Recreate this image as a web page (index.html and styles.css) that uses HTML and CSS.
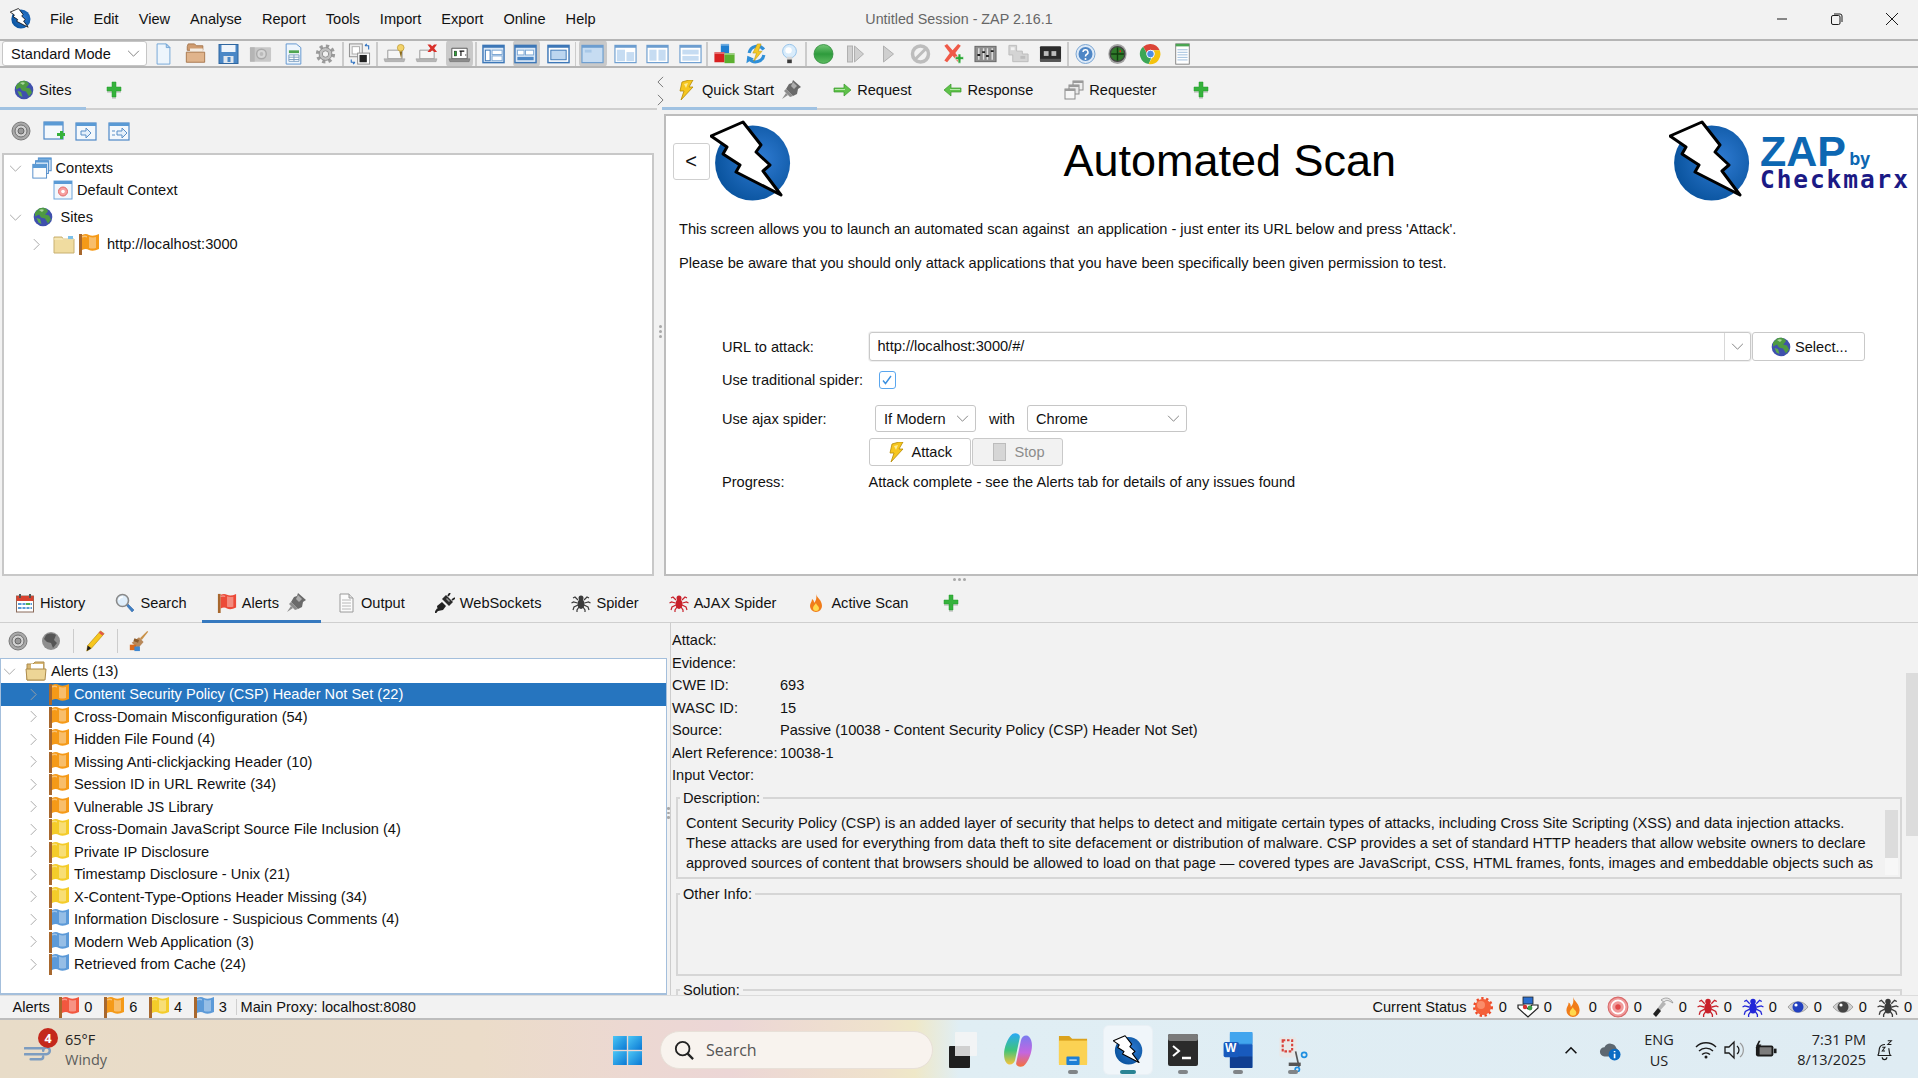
FILE: index.html
```html
<!DOCTYPE html>
<html lang="en">
<head>
<meta charset="utf-8">
<title>Untitled Session - ZAP 2.16.1</title>
<link rel="stylesheet" href="styles.css">
</head>
<body>
<svg class="defs" aria-hidden="true">
<defs>
<radialGradient id="gBlue" cx=".6" cy=".45" r=".6"><stop offset="0" stop-color="#2f7bd2"/><stop offset="1" stop-color="#0a549f"/></radialGradient>
<linearGradient id="gWin" x1="0" y1="0" x2="1" y2="1"><stop offset="0" stop-color="#4cc6f5"/><stop offset="1" stop-color="#0a78d4"/></linearGradient>
<linearGradient id="gGreen" x1="0" y1="0" x2="0" y2="1"><stop offset="0" stop-color="#74c777"/><stop offset=".5" stop-color="#2e9b3c"/><stop offset="1" stop-color="#5fbc62"/></linearGradient>
<linearGradient id="gCo1" x1="0" y1="0" x2="0" y2="1"><stop offset="0" stop-color="#29a9f6"/><stop offset=".55" stop-color="#3fc47a"/><stop offset="1" stop-color="#f5c33b"/></linearGradient>
<linearGradient id="gCo2" x1="0" y1="0" x2="0" y2="1"><stop offset="0" stop-color="#7a7cf0"/><stop offset=".55" stop-color="#c466e0"/><stop offset="1" stop-color="#f5703b"/></linearGradient>
</defs>
<symbol id="logo" viewBox="0 0 82 82"><circle cx="42.6" cy="43" r="37.5" fill="url(#gBlue)"/><path d="M1 16 33 2 51 25 46 32 60 45 53 51 71 75 26 52 30 45 13 34 17 27Z" fill="#fff" stroke="#000" stroke-width="3" stroke-linejoin="round"/></symbol>
<symbol id="flag" viewBox="0 0 22 22"><rect x="1" y="1" width="3" height="21" fill="#a8682e"/><path d="M4 2q4-2 7 0q4 2 10-1v15q-6 3-10 1q-3-2-7 0z" fill="currentColor"/><path d="M11 3.500q3 1.500 7 .5v11q-4 1-7 0z" fill="#fff" opacity=".36"/><path d="M4 3q3-1 5 0v1.500q-2-1-5 0z" fill="#fff" opacity=".4"/></symbol>
<symbol id="chevR" viewBox="0 0 10 14"><path d="M2 1l6 6-6 6" fill="none" stroke="currentColor" stroke-width="1"/></symbol>
<symbol id="chevL" viewBox="0 0 10 14"><path d="M8 1L2 7l6 6" fill="none" stroke="currentColor" stroke-width="1"/></symbol>
<symbol id="chevD" viewBox="0 0 14 10"><path d="M1 2l6 6 6-6" fill="none" stroke="currentColor" stroke-width="1"/></symbol>
<symbol id="chevU" viewBox="0 0 14 10"><path d="M1 8l6-6 6 6" fill="none" stroke="currentColor" stroke-width="1.800"/></symbol>
<symbol id="globe" viewBox="0 0 20 20"><circle cx="10" cy="10" r="9.300" fill="#3f50ad"/><path d="M6 1.500c3-1 6-1 8 1 2 2 0 3-2 5l4 1 2 4-3 4-3-5-4-1-2-3-4 2 0-4z" fill="#4e9a42"/><path d="M3.500 11l3.500 1 1.500 5-3-1.500z" fill="#5bab4d"/><path d="M6 3c2-1 4-1 5 0l-2 2z" fill="#a8d59a"/></symbol>
<symbol id="plus" viewBox="0 0 20 20"><path d="M8 4h4v5h5v4h-5v6H8v-6H3V9h5z" fill="#b9b9b9" opacity=".6"/><path d="M8 2h4v5h5v4h-5v6H8v-6H3V7h5z" fill="#36b23c" stroke="#239a2b" stroke-width=".5"/></symbol>
<symbol id="pin" viewBox="0 0 20 20"><path d="M12 0l8 7-3 2-1 5-4 2-7-7 3-5 3-1z" fill="#6a6a6a"/><path d="M5 9l7 7-3 1-6-6z" fill="#8c8c8c"/><path d="M5 13l-4 6 6-4z" fill="#8f8f8f"/><path d="M12 2l4 4-3 3-3-3z" fill="#adadad"/></symbol>
<symbol id="bolt" viewBox="0 0 20 20"><path d="M12 0 5 2 3 11h4L4 20 16 7h-4l4-7z" fill="#f6c61e" stroke="#b58a08" stroke-width=".8" stroke-linejoin="round"/><path d="M7 4l4-1-2 5z" fill="#fdeb96"/></symbol>
<symbol id="arrR" viewBox="0 0 20 20"><path d="M2 8h10V4l7 6-7 6v-4H2z" fill="#5fc24a" stroke="#3a9a2d" stroke-width=".7"/><path d="M3 9h10v1H3z" fill="#b5e8a8"/></symbol>
<symbol id="arrL" viewBox="0 0 20 20"><path d="M18 8H8V4l-7 6 7 6v-4h10z" fill="#5fc24a" stroke="#3a9a2d" stroke-width=".7"/><path d="M7 9h10v1H7z" fill="#b5e8a8"/></symbol>
<symbol id="stack" viewBox="0 0 20 20"><rect x="9" y="1" width="10" height="9" fill="#eee" stroke="#8a8a8a"/><rect x="5" y="5" width="10" height="9" fill="#e8e8e8" stroke="#8a8a8a"/><rect x="1" y="9" width="10" height="10" fill="#f6f6f6" stroke="#8a8a8a"/><path d="M1 9h10v2H1zM5 5h10v2H5zM9 1h10v2H9z" fill="#9a9a9a"/></symbol>
<symbol id="cal" viewBox="0 0 20 20"><rect x="1.500" y="3" width="17" height="16" fill="#fff" stroke="#8a6a5a"/><rect x="1.500" y="3" width="17" height="5" fill="#d8422f"/><path d="M5 1v4M15 1v4" stroke="#555" stroke-width="2"/><path d="M3 10h14v2H3zM3 14h14v2H3z" fill="#5a9ad5"/><path d="M7 9v9M11 9v9M15 9v9" stroke="#fff"/><rect x="11" y="10" width="4" height="2" fill="#50b050"/></symbol>
<symbol id="mag" viewBox="0 0 20 20"><path d="M11 12l6 7 2-2-6-6z" fill="#3f7fc4" stroke="#2a5f9c" stroke-width=".5"/><circle cx="7.500" cy="7.500" r="6" fill="#dfeefb" stroke="#8a8a8a" stroke-width="1.600"/><path d="M4 7a3.500 3.500 0 0 1 4-3" fill="none" stroke="#fff" stroke-width="1.500"/></symbol>
<symbol id="doc" viewBox="0 0 20 20"><path d="M4 1h9l4 4v14H4z" fill="#fbfbfb" stroke="#9a9a9a"/><path d="M13 1v4h4" fill="#ddd" stroke="#9a9a9a"/><path d="M6 7h9M6 10h9M6 13h9M6 16h9" stroke="#b8b8b8"/></symbol>
<symbol id="plug" viewBox="0 0 20 20"><path d="M13 3l2-3M17 7l3-2" fill="none" stroke="#222" stroke-width="1.800"/><path d="M11 2l7 7-4 4-7-7z" fill="#2b2b2b"/><path d="M7 9l4 4-3 4-5 1-1-5z" fill="#222"/><path d="M3 16l-3 4" stroke="#222" stroke-width="2.200"/><path d="M12 5l3 3-1 1-3-3z" fill="#999"/></symbol>
<symbol id="spider" viewBox="0 0 20 20"><g stroke="currentColor" stroke-width="1.200" fill="none"><path d="M7 7L4 4 2 5M13 7l3-3 2 1M6.500 10l-4-1-2 1M13.500 10l4-1 2 1M7 12l-4 2-1 3M13 12l4 2 1 3M8 14l-2 3v2M12 14l2 3v2"/></g><ellipse cx="10" cy="11" rx="3.500" ry="5" fill="currentColor"/><circle cx="10" cy="5" r="2.500" fill="currentColor"/></symbol>
<symbol id="fire" viewBox="0 0 20 20"><path d="M10 1c1 4 6 6 6 12a6 6 0 0 1-12 0c0-3 2-4 2-7 2 1 2 3 2 4 2-2 3-5 2-9z" fill="#f07c1a"/><path d="M10 10c0 2 3 3 3 5a3 3 0 0 1-6 0c0-2 2-3 3-5z" fill="#ffd84d"/></symbol>
<symbol id="target" viewBox="0 0 20 20"><circle cx="10" cy="10" r="9" fill="#f09a9a" stroke="#d86a6a"/><circle cx="10" cy="10" r="6" fill="none" stroke="#fff" stroke-width="1.500"/><circle cx="10" cy="10" r="2.500" fill="#e04a4a"/></symbol>
<symbol id="target2" viewBox="0 0 22 22"><circle cx="11" cy="11" r="9" fill="#a9a9a9" stroke="#7a7a7a"/><circle cx="11" cy="11" r="6" fill="#d2d2d2" stroke="#6f6f6f"/><circle cx="11" cy="11" r="3" fill="#999" stroke="#666"/></symbol>
<symbol id="globeG" viewBox="0 0 22 22"><circle cx="11" cy="11" r="9" fill="#8f8f8f"/><path d="M6 5c3-2 7-2 10 0l-2 5 3 3-4 5-2-5-4-1-3-3z" fill="#555"/></symbol>
<symbol id="ctxAdd" viewBox="0 0 22 22"><rect x="1" y="2" width="19" height="17" fill="#f4f8fc" stroke="#4d88c7" stroke-width="1.200"/><rect x="1" y="2" width="19" height="3.500" fill="#5a9ad5"/><path d="M14 13h3v-2h3v2h2v3h-2v3h-3v-3h-3z" fill="#36b23c"/></symbol>
<symbol id="ctxIn" viewBox="0 0 22 22"><rect x="1" y="3" width="20" height="17" fill="#f4f8fc" stroke="#4d88c7" stroke-width="1.200"/><rect x="1" y="3" width="20" height="3" fill="#5a9ad5"/><path d="M6 11h5V8l5 5-5 5v-3H6z" fill="#e4effa" stroke="#5a8fc7"/></symbol>
<symbol id="ctxOut" viewBox="0 0 22 22"><rect x="1" y="3" width="20" height="17" fill="#f4f8fc" stroke="#4d88c7" stroke-width="1.200"/><rect x="1" y="3" width="20" height="3" fill="#5a9ad5"/><path d="M9 11h5V8l5 5-5 5v-3H9z" fill="#e4effa" stroke="#5a8fc7"/><path d="M4 11h3M4 15h3" stroke="#5a8fc7"/></symbol>
<symbol id="ctxs" viewBox="0 0 22 24"><rect x="7" y="1" width="14" height="14" fill="#c9def3" stroke="#4d88c7"/><rect x="4" y="4" width="14" height="14" fill="#dcebf9" stroke="#4d88c7"/><rect x="1" y="8" width="15" height="15" fill="#fdfdfd" stroke="#4d88c7"/><path d="M1 8h15v4H1zM4 4h14v2H4zM7 1h14v2H7z" fill="#5a9ad5"/></symbol>
<symbol id="ctx" viewBox="0 0 20 20"><rect x="1" y="1" width="18" height="18" fill="#f2f7fc" stroke="#6fa5dc"/><rect x="1" y="1" width="18" height="3" fill="#5a9ad5"/><circle cx="10" cy="11.500" r="4.500" fill="#f7a0a0" stroke="#e06a6a"/><circle cx="10" cy="11.500" r="1.800" fill="#fff"/></symbol>
<symbol id="folder" viewBox="0 0 22 22"><path d="M1 4h8l1 2h11v14H1z" fill="#f0dca0" stroke="#c8b070"/><path d="M1 6h20" stroke="#faf0c8"/><rect x="15" y="3" width="5" height="3" fill="#7cc0ea"/></symbol>
<symbol id="folderOpen" viewBox="0 0 22 22"><path d="M2 4h6l2-2h9v18H2z" fill="#d9b873" stroke="#ad8c4c"/><rect x="6" y="4" width="12" height="6" fill="#fff"/><path d="M1 9h20l-1 11H2z" fill="#edd596" stroke="#ad8c4c"/></symbol>
<symbol id="tnew" viewBox="0 0 22 24"><path d="M4 1h10l4 4v18H4z" fill="#edf5fc" stroke="#6ea3d5"/><path d="M14 1v4h4z" fill="#b8d4ef" stroke="#6ea3d5"/></symbol>
<symbol id="topen" viewBox="0 0 24 24"><path d="M3 4l1-3h7l2 2h7v5H3z" fill="#cf9c70" stroke="#a5744a"/><rect x="6" y="6" width="14" height="6" fill="#f4ece2"/><path d="M2 10h20v11H2z" fill="#e0b48c" stroke="#a5744a"/></symbol>
<symbol id="tsave" viewBox="0 0 22 22"><rect x="1.500" y="1.500" width="19" height="19" fill="#4a87c6" stroke="#2f669f"/><rect x="4" y="2" width="14" height="7" fill="#eef4fb"/><rect x="6" y="13" width="10" height="7" fill="#dfe6ee"/><rect x="10" y="14" width="3" height="5" fill="#4a87c6"/></symbol>
<symbol id="tcam" viewBox="0 0 24 22"><rect x="1" y="4" width="22" height="15" rx="1" fill="#c8c8c8"/><rect x="1" y="4" width="5" height="15" fill="#b5b5b5"/><circle cx="13" cy="11" r="5" fill="#d6d6d6" stroke="#aaa" stroke-width="1.500"/><circle cx="13" cy="11" r="2" fill="#bbb"/></symbol>
<symbol id="tprop" viewBox="0 0 22 24"><path d="M3 1h11l5 4v18H3z" fill="#eef5fc" stroke="#5a92cf"/><rect x="6" y="8" width="11" height="3" fill="#4fa552"/><path d="M6 13h11v7H6z" fill="#fff" stroke="#7a9cc0"/><path d="M6 15.500h11M6 18h11M11.500 13v7" stroke="#7a9cc0"/></symbol>
<symbol id="tgear" viewBox="0 0 24 24"><circle cx="12" cy="12" r="8" fill="none" stroke="#9b9b9b" stroke-width="5" stroke-dasharray="3.200 3.100"/><circle cx="12" cy="12" r="7" fill="#c0c0c0" stroke="#8a8a8a"/><circle cx="12" cy="12" r="3.500" fill="#f2f2f2" stroke="#8a8a8a"/></symbol>
<symbol id="tcopy" viewBox="0 0 24 24"><rect x="1" y="1" width="14" height="14" fill="#ededed" stroke="#8a8a8a"/><rect x="4" y="4" width="8" height="8" fill="#fff" stroke="#aaa"/><rect x="10" y="11" width="13" height="12" fill="#fff" stroke="#8a8a8a"/><rect x="12" y="13" width="8" height="8" fill="#222"/><path d="M18 3h4v4M18 3l2-2M3 18v3h4M7 21l-2 2" fill="none" stroke="#2a6fc0" stroke-width="1.200"/></symbol>
<symbol id="lap" viewBox="0 0 24 22"><path d="M5 7h15v9H5z" fill="#f6f6f6" stroke="#9a9a9a"/><path d="M1 16h22l-1 3H2z" fill="#b6b6b6" stroke="#999" stroke-width=".5"/></symbol>
<symbol id="lapBulb" viewBox="0 0 24 22"><use href="#lap"/><path d="M17 8l2 8 1-8z" fill="#8a6a1a"/><circle cx="18.500" cy="4.500" r="3.500" fill="#f3d36a" stroke="#b7932a" stroke-width=".7"/></symbol>
<symbol id="lapX" viewBox="0 0 24 22"><use href="#lap"/><path d="M13 1l3 0 2 2 2-2 3 0-3 4 3 4h-3l-2-2-2 2h-3l3-4z" fill="#d9302a"/></symbol>
<symbol id="lapOn" viewBox="0 0 24 22"><path d="M4 5h16v11H4z" fill="#fff" stroke="#555"/><rect x="6.500" y="8" width="2.500" height="5" fill="#2fa83a" stroke="#111" stroke-width=".5"/><path d="M12 8h5M13.500 8v5M18 12h1" stroke="#111" stroke-width="1.200"/><path d="M1 16h22l-1 3H2z" fill="#8c8c8c" stroke="#666" stroke-width=".5"/></symbol>
<symbol id="w1" viewBox="0 0 24 22"><rect x="1" y="2" width="22" height="18" fill="#dce9f7" stroke="#3d77b7" stroke-width="1.500"/><rect x="1" y="2" width="22" height="2.500" fill="#3d77b7"/><rect x="3.500" y="7" width="5" height="11" fill="#fff" stroke="#3d77b7"/><rect x="10.500" y="7" width="10.500" height="4.500" fill="#fff" stroke="#7ba6d3"/><rect x="10.500" y="13" width="10.500" height="5" fill="#fff" stroke="#7ba6d3"/></symbol>
<symbol id="w2" viewBox="0 0 24 22"><rect x="1" y="2" width="22" height="18" fill="#dce9f7" stroke="#3d77b7" stroke-width="1.500"/><rect x="1" y="2" width="22" height="2.500" fill="#3d77b7"/><rect x="3.500" y="7" width="7" height="5" fill="#fff" stroke="#7ba6d3"/><rect x="12" y="7" width="8.500" height="5" fill="#fff" stroke="#7ba6d3"/><rect x="3.500" y="14" width="17" height="3.500" fill="#4d88c7"/></symbol>
<symbol id="w3" viewBox="0 0 24 22"><rect x="1" y="2" width="22" height="18" fill="#fff" stroke="#3d77b7" stroke-width="1.500"/><rect x="1" y="2" width="22" height="2.500" fill="#3d77b7"/><rect x="4" y="7" width="16" height="10" fill="#bcd6f0" stroke="#3d77b7"/></symbol>
<symbol id="w4" viewBox="0 0 24 22"><rect x="1" y="2" width="22" height="18" fill="#c6dcf2" stroke="#6c9dcf" stroke-width="1.200"/><rect x="1" y="2" width="22" height="2.500" fill="#6c9dcf"/><rect x="4" y="6.500" width="7" height="3" fill="#a8c8e8"/></symbol>
<symbol id="w5" viewBox="0 0 24 22"><rect x="1" y="2" width="22" height="18" fill="#fff" stroke="#6c9dcf" stroke-width="1.200"/><rect x="1" y="2" width="22" height="2.500" fill="#6c9dcf"/><rect x="3" y="6.500" width="8.500" height="12" fill="#c6dcf2"/><rect x="13" y="9" width="8" height="9.500" fill="#c6dcf2"/></symbol>
<symbol id="w6" viewBox="0 0 24 22"><rect x="1" y="2" width="22" height="18" fill="#fff" stroke="#6c9dcf" stroke-width="1.200"/><rect x="1" y="2" width="22" height="2.500" fill="#6c9dcf"/><rect x="3.500" y="6.500" width="7.500" height="11.500" fill="#c6dcf2"/><rect x="13" y="6.500" width="7.500" height="11.500" fill="#c6dcf2"/></symbol>
<symbol id="w7" viewBox="0 0 24 22"><rect x="1" y="2" width="22" height="18" fill="#fff" stroke="#6c9dcf" stroke-width="1.200"/><rect x="1" y="2" width="22" height="2.500" fill="#6c9dcf"/><rect x="3.500" y="6.500" width="17" height="5" fill="#c6dcf2"/><rect x="3.500" y="13" width="17" height="5" fill="#c6dcf2"/></symbol>
<symbol id="blocks" viewBox="0 0 24 24"><rect x="8" y="1" width="9" height="11" fill="#1f7fd0"/><rect x="1" y="10" width="11" height="11" fill="#d82020"/><rect x="12" y="11" width="11" height="11" fill="#5cb030"/><path d="M8 1h9v2H8zM1 10h11v2H1zM12 11h11v2H12z" fill="#fff" opacity=".35"/></symbol>
<symbol id="refresh" viewBox="0 0 24 24"><path d="M4 11a9 9 0 0 1 16-4M20 13a9 9 0 0 1-16 4" fill="none" stroke="#2f8fd8" stroke-width="3.500"/><path d="M1 22l1-8 7 3z" fill="#2f8fd8"/><path d="M13 1 8 11h4L9 20l9-11h-4l3-8z" fill="#f3c928" stroke="#b99414" stroke-width=".6"/></symbol>
<symbol id="bulb" viewBox="0 0 24 24"><circle cx="12" cy="9" r="7.500" fill="#d9ecfb" stroke="#8fbfe8"/><circle cx="11" cy="8" r="3.500" fill="#fff"/><path d="M9 15h6v3H9z" fill="#d6d6d6"/><path d="M9.500 18h5v4h-5z" fill="#3a3a3a"/></symbol>
<symbol id="go" viewBox="0 0 22 22"><circle cx="11" cy="11" r="9.500" fill="url(#gGreen)" stroke="#2c8a38" stroke-width=".8"/></symbol>
<symbol id="stepP" viewBox="0 0 22 22"><rect x="3" y="3" width="5" height="16" fill="#d0d0d0" stroke="#b0b0b0"/><path d="M10 3l9 8-9 8z" fill="#d0d0d0" stroke="#b0b0b0"/></symbol>
<symbol id="play" viewBox="0 0 22 22"><path d="M6 3l10 8-10 8z" fill="#cfcfcf" stroke="#b0b0b0"/></symbol>
<symbol id="noent" viewBox="0 0 22 22"><circle cx="11" cy="11" r="8" fill="none" stroke="#bdbdbd" stroke-width="3.500"/><path d="M6 16l10-10" stroke="#bdbdbd" stroke-width="3"/></symbol>
<symbol id="xadd" viewBox="0 0 24 24"><path d="M2 3l3-2 6 7 6-7 3 2-6 8 6 8-3 2-6-7-6 7-3-2 6-8z" fill="#f05a48"/><path d="M14 15h3v-3h3v3h3v3h-3v4h-3v-4h-3z" fill="#2fa83a" stroke="#fff" stroke-width=".6"/></symbol>
<symbol id="mixer" viewBox="0 0 24 22"><rect x="1" y="3" width="22" height="16" fill="#8f8f8f" stroke="#666"/><path d="M5 5v12M10 5v12M14 5v12M19 5v12" stroke="#e0e0e0" stroke-width="1.500"/><path d="M3.500 12h3M8.500 9h3M12.500 13h3M17.500 8h3" stroke="#222" stroke-width="2"/></symbol>
<symbol id="mach" viewBox="0 0 24 22"><path d="M2 2h8v6h6v3h6v8H6v-7H2z" fill="#d4d4d4" stroke="#bcbcbc"/><rect x="4" y="4" width="4" height="3" fill="#f2f2f2"/><rect x="14" y="13" width="5" height="3" fill="#bdbdbd"/></symbol>
<symbol id="counter" viewBox="0 0 24 22"><rect x="1" y="3" width="22" height="16" rx="1" fill="#2b2b2b"/><rect x="5" y="8" width="5" height="5" fill="#bdbdbd"/><rect x="13" y="8" width="5" height="5" fill="#bdbdbd"/><path d="M1 16h22v3H1z" fill="#555"/></symbol>
<symbol id="help" viewBox="0 0 22 22"><circle cx="11" cy="11" r="9.500" fill="#dce9f7" stroke="#7ba6d3"/><circle cx="11" cy="11" r="7" fill="#4e86c5"/><path d="M8.500 9a2.500 2.500 0 1 1 3.500 2.500c-.8.500-1 1-1 2" fill="none" stroke="#fff" stroke-width="1.500"/><circle cx="11" cy="16" r="1" fill="#fff"/></symbol>
<symbol id="radar" viewBox="0 0 22 24"><ellipse cx="11" cy="12" rx="10" ry="11" fill="#a2a2a2"/><circle cx="11" cy="12" r="8" fill="#2f7a2a" stroke="#444" stroke-width="1.500"/><path d="M11 5v14M4 12h14" stroke="#123d10" stroke-width="1.500"/><circle cx="14" cy="9" r="1" fill="#e02b20"/></symbol>
<symbol id="chrome" viewBox="0 0 24 24"><path d="M12 1a11 11 0 0 1 10 7H12a4 4 0 0 0-4 3L4 4a11 11 0 0 1 8-3z" fill="#db4437"/><path d="M4 4l5 9a4 4 0 0 0 4 3l-3 7A11 11 0 0 1 4 4z" fill="#3ca655"/><path d="M22 8a11 11 0 0 1-12 15l5-9a4 4 0 0 0 0-6z" fill="#f4c20d"/><circle cx="12" cy="12" r="4.200" fill="#4d8de4" stroke="#fff"/></symbol>
<symbol id="note" viewBox="0 0 22 26"><rect x="3" y="1" width="16" height="24" fill="#fff" stroke="#777"/><rect x="3" y="1" width="16" height="3" fill="#4aa552"/><path d="M5 8h12M5 11h12M5 14h12M5 17h12M5 20h12" stroke="#8fb4d8"/></symbol>
<symbol id="pencil" viewBox="0 0 22 24"><path d="M17 1l4 3L7 20l-5 3 1-6z" fill="#f6c61e" stroke="#b58a08" stroke-width=".7"/><path d="M17 1l4 3-2 2-4-3z" fill="#e2574c"/><path d="M3 17l4 3-5 3z" fill="#222"/></symbol>
<symbol id="brush" viewBox="0 0 22 24"><path d="M20 1l1 1-7 9-2-2z" fill="#c9924a"/><path d="M11 8l5 5-6 7-7-6z" fill="#b8895a"/><path d="M6 9l5 2-1 3-5-2z" fill="#8b5a2a"/><rect x="1" y="16" width="7" height="6" fill="#d96a1c"/><rect x="6" y="18" width="6" height="5" fill="#3f88d0"/></symbol>
<symbol id="sun" viewBox="0 0 22 22"><circle cx="11" cy="11" r="7.500" fill="none" stroke="#ee4a28" stroke-width="5" stroke-dasharray="2 2.200"/><circle cx="11" cy="11" r="8" fill="#f4603a"/><circle cx="9" cy="9" r="4" fill="#fa8c6a"/></symbol>
<symbol id="inbox" viewBox="0 0 22 22"><path d="M1 9h6l4 4 4-4h6v3l-10 9L1 12z" fill="#fff" stroke="#222" stroke-width="1.200"/><rect x="6" y="1" width="10" height="7" fill="#2a6fd0" stroke="#222" stroke-width=".8"/><circle cx="8" cy="11" r="2.200" fill="#d83030"/><circle cx="13" cy="12" r="2.400" fill="#3ca048"/></symbol>
<symbol id="hammer" viewBox="0 0 22 22"><path d="M9 4c4-3 9-3 12 3l-2-1c-3-2-5-2-7 0z" fill="#e6e6e6" stroke="#888" stroke-width=".7"/><path d="M11 5l3 3L4 19l-2-2z" fill="#b5b5b5"/><path d="M6 12l3 3-5 6-3-3z" fill="#222"/></symbol>
<symbol id="eye" viewBox="0 0 22 22"><path d="M1 11c5-7 15-7 20 0-5 7-15 7-20 0z" fill="#cfcfcf" stroke="#8a8a8a" stroke-width=".7"/><circle cx="11" cy="11" r="5.500" fill="currentColor"/><circle cx="9" cy="9" r="1.600" fill="#fff"/></symbol>
<symbol id="wind" viewBox="0 0 36 26"><path d="M1 11h22M1 18h26a4 4 0 1 0-4-4M8 24h12a3 3 0 0 0 3-3" fill="none" stroke="#7c9cc0" stroke-width="3" stroke-linecap="round"/></symbol>
<symbol id="winlogo" viewBox="0 0 30 30"><rect width="14.300" height="14.300" fill="url(#gWin)"/><rect x="15.700" width="14.300" height="14.300" fill="url(#gWin)"/><rect y="15.700" width="14.300" height="14.300" fill="url(#gWin)"/><rect x="15.700" y="15.700" width="14.300" height="14.300" fill="url(#gWin)"/></symbol>
<symbol id="srch" viewBox="0 0 22 22"><circle cx="9.500" cy="9.500" r="7.500" fill="none" stroke="#222" stroke-width="2"/><path d="M15 15l6 6" stroke="#222" stroke-width="2.500"/></symbol>
<symbol id="tasks" viewBox="0 0 30 38"><rect x="1" y="15" width="21" height="22" rx="1" fill="#1f1f1f"/><rect x="7" y="1" width="22" height="24" rx="1" fill="#f4f4f4" opacity=".85"/><rect x="7" y="15" width="15" height="10" fill="#d0d0d0"/></symbol>
<symbol id="copilot" viewBox="0 0 32 38"><path d="M10 2c4-2 8 0 8 3l-5 24c-1 5-6 7-9 4C-2 27 2 9 10 2z" fill="url(#gCo1)"/><path d="M22 36c-4 2-8 0-8-3l5-24c1-5 6-7 9-4 6 6 2 24-6 31z" fill="url(#gCo2)"/></symbol>
<symbol id="explorer" viewBox="0 0 32 32"><path d="M1 1h11l3 3h16v26H1z" fill="#dba21d"/><rect x="1" y="6" width="30" height="26" fill="#fbd253"/><rect x="9" y="23" width="14" height="9" rx="1" fill="#1c7fd6"/><rect x="12" y="26" width="8" height="1.600" fill="#bfe0fa"/></symbol>
<symbol id="term" viewBox="0 0 30 32"><rect width="30" height="32" rx="2" fill="#2b2b2b"/><rect width="30" height="7" rx="2" fill="#7a7a7a"/><path d="M5 12l6 5-6 5" fill="none" stroke="#fff" stroke-width="2"/><path d="M14 24h9" stroke="#fff" stroke-width="2.500"/></symbol>
<symbol id="word" viewBox="0 0 32 40"><rect x="7" width="25" height="40" rx="2" fill="#2b7cd3"/><rect x="7" y="14" width="25" height="13" fill="#185abd"/><rect x="7" y="27" width="25" height="13" fill="#103f91"/><rect x="7" width="25" height="13" fill="#41a5ee"/><rect y="11" width="17" height="17" rx="2" fill="#185abd"/></symbol>
<symbol id="snip" viewBox="0 0 34 42"><rect x="1" y="1" width="20" height="24" rx="3" fill="#e8e8e8"/><rect x="5" y="5" width="11" height="13" fill="none" stroke="#d9423a" stroke-width="2.500" stroke-dasharray="3 2"/><path d="M20 18l4 18" stroke="#555" stroke-width="2"/><circle cx="30" cy="22" r="3" fill="none" stroke="#1f8fe0" stroke-width="2"/><circle cx="22" cy="39" r="2.500" fill="none" stroke="#1f8fe0" stroke-width="2"/><path d="M12 33h14" stroke="#555" stroke-width="4"/></symbol>
<symbol id="cloud" viewBox="0 0 24 24"><path d="M6 19a5 5 0 0 1 0-10 7 7 0 0 1 13 1 5 5 0 0 1-1 9z" fill="#5d6770"/><circle cx="17" cy="17" r="6.500" fill="#0a6cc4"/><path d="M17 16v5M17 13v1.500" stroke="#fff" stroke-width="1.800"/></symbol>
<symbol id="wifi" viewBox="0 0 22 18"><path d="M1 6a14 14 0 0 1 20 0M4 10a10 10 0 0 1 14 0M7 13.500a6 6 0 0 1 8 0" fill="none" stroke="#1b1b1b" stroke-width="1.400"/><circle cx="11" cy="16" r="1.500" fill="#1b1b1b"/></symbol>
<symbol id="vol" viewBox="0 0 22 20"><path d="M1 7h4l5-5v16l-5-5H1z" fill="none" stroke="#1b1b1b" stroke-width="1.300"/><path d="M13 6a5 5 0 0 1 0 8" fill="none" stroke="#1b1b1b" stroke-width="1.300"/><path d="M16 3a9 9 0 0 1 0 14" fill="none" stroke="#9a9a9a" stroke-width="1.200"/></symbol>
<symbol id="batt" viewBox="0 0 24 20"><rect x="1" y="5" width="19" height="12" rx="2" fill="#1b1b1b"/><rect x="20.500" y="8.500" width="3" height="5" fill="#1b1b1b"/><rect x="5" y="7" width="13" height="8" fill="#7c7c7c"/><path d="M4 0 1 6h3l-2 5 5-7H4l2-4z" fill="#1b1b1b"/></symbol>
<symbol id="bell" viewBox="0 0 24 24"><path d="M4 18c2-2 1-4 2-8 1-3 4-4 6-4M4 18h14c-2-2-1-6-2-8" fill="none" stroke="#1b1b1b" stroke-width="1.300"/><path d="M9 20a2.500 2.500 0 0 0 5 0" fill="none" stroke="#1b1b1b" stroke-width="1.300"/><path d="M15 2h4l-4 4h4M9 9h3l-3 4h3" fill="none" stroke="#1b1b1b" stroke-width="1.100"/></symbol>
<symbol id="back" viewBox="0 0 12 10"><path d="M1 5h10" stroke="#1b1b1b"/></symbol>
<symbol id="restore" viewBox="0 0 12 12"><rect x=".5" y="2.500" width="8.500" height="9" rx="1.500" fill="none" stroke="#1b1b1b"/><path d="M3 1h6a2 2 0 0 1 2 2v6" fill="none" stroke="#1b1b1b"/></symbol>
<symbol id="close" viewBox="0 0 12 12"><path d="M0 0l12 12M12 0L0 12" stroke="#1b1b1b"/></symbol>
<symbol id="check" viewBox="0 0 12 12"><path d="M2 6.500l2.500 3L10 2" fill="none" stroke="#3a8fe0" stroke-width="1.400"/></symbol>
</svg>

<div class="app">
  <header class="titlebar">
    <nav class="menu">
      <svg class="menu-logo"><use href="#logo"/></svg>
      <span>File</span><span>Edit</span><span>View</span><span>Analyse</span><span>Report</span><span>Tools</span><span>Import</span><span>Export</span><span>Online</span><span>Help</span>
    </nav>
    <div class="wintitle">Untitled Session - ZAP 2.16.1</div>
    <div class="winctl">
      <svg class="wc wc-min"><use href="#back"/></svg>
      <svg class="wc"><use href="#restore"/></svg>
      <svg class="wc"><use href="#close"/></svg>
    </div>
  </header>

  <div class="toolbar">
    <div class="combo combo-mode"><span class="combo-text">Standard Mode</span><svg class="chev-d"><use href="#chevD"/></svg></div>
    <div class="tbtn"><svg class="ti"><use href="#tnew"/></svg></div>
    <div class="tbtn"><svg class="ti"><use href="#topen"/></svg></div>
    <div class="tbtn"><svg class="ti"><use href="#tsave"/></svg></div>
    <div class="tbtn"><svg class="ti"><use href="#tcam"/></svg></div>
    <div class="tbtn"><svg class="ti"><use href="#tprop"/></svg></div>
    <div class="tbtn"><svg class="ti"><use href="#tgear"/></svg></div>
    <i class="tsep"></i>
    <div class="tbtn"><svg class="ti"><use href="#tcopy"/></svg></div>
    <i class="tsep"></i>
    <div class="tbtn"><svg class="ti"><use href="#lapBulb"/></svg></div>
    <div class="tbtn"><svg class="ti"><use href="#lapX"/></svg></div>
    <div class="tbtn sel"><svg class="ti"><use href="#lapOn"/></svg></div>
    <i class="tsep"></i>
    <div class="tbtn"><svg class="ti"><use href="#w1"/></svg></div>
    <div class="tbtn sel"><svg class="ti"><use href="#w2"/></svg></div>
    <div class="tbtn"><svg class="ti"><use href="#w3"/></svg></div>
    <i class="tsep"></i>
    <div class="tbtn sel"><svg class="ti"><use href="#w4"/></svg></div>
    <div class="tbtn"><svg class="ti"><use href="#w5"/></svg></div>
    <div class="tbtn"><svg class="ti"><use href="#w6"/></svg></div>
    <div class="tbtn"><svg class="ti"><use href="#w7"/></svg></div>
    <i class="tsep"></i>
    <div class="tbtn"><svg class="ti"><use href="#blocks"/></svg></div>
    <div class="tbtn"><svg class="ti"><use href="#refresh"/></svg></div>
    <div class="tbtn"><svg class="ti"><use href="#bulb"/></svg></div>
    <i class="tsep"></i>
    <div class="tbtn"><svg class="ti"><use href="#go"/></svg></div>
    <div class="tbtn"><svg class="ti"><use href="#stepP"/></svg></div>
    <div class="tbtn"><svg class="ti"><use href="#play"/></svg></div>
    <div class="tbtn"><svg class="ti"><use href="#noent"/></svg></div>
    <div class="tbtn"><svg class="ti"><use href="#xadd"/></svg></div>
    <div class="tbtn"><svg class="ti"><use href="#mixer"/></svg></div>
    <div class="tbtn"><svg class="ti"><use href="#mach"/></svg></div>
    <div class="tbtn"><svg class="ti"><use href="#counter"/></svg></div>
    <i class="tsep"></i>
    <div class="tbtn"><svg class="ti"><use href="#help"/></svg></div>
    <div class="tbtn"><svg class="ti"><use href="#radar"/></svg></div>
    <div class="tbtn"><svg class="ti"><use href="#chrome"/></svg></div>
    <div class="tbtn"><svg class="ti"><use href="#note"/></svg></div>
  </div>

  <main class="upper">
    <section class="sites">
      <div class="tabs tabs-up">
        <div class="tab tab-light tab-first"><svg class="i20"><use href="#globe"/></svg><span>Sites</span></div>
        <div class="tab tab-plus"><svg class="i20"><use href="#plus"/></svg></div>
      </div>
      <div class="sub-tools">
        <svg class="i22"><use href="#target2"/></svg>
        <svg class="i22"><use href="#ctxAdd"/></svg>
        <svg class="i22"><use href="#ctxIn"/></svg>
        <svg class="i22"><use href="#ctxOut"/></svg>
      </div>
      <div class="sites-tree">
        <div class="srow"><svg class="exp exp-a"><use href="#chevD"/></svg><svg class="i22 ic-ctx"><use href="#ctxs"/></svg><span>Contexts</span></div>
        <div class="srow srow-ctx"><svg class="i20"><use href="#ctx"/></svg><span>Default Context</span></div>
        <div class="srow srow-gap"><svg class="exp exp-a"><use href="#chevD"/></svg><svg class="i20 ic-globe"><use href="#globe"/></svg><span>Sites</span></div>
        <div class="srow srow-gap srow-host"><svg class="exp-r"><use href="#chevR"/></svg><svg class="i22 ic-folder"><use href="#folder"/></svg><svg class="i22 fl-o ic-hostflag"><use href="#flag"/></svg><span>http://localhost:3000</span></div>
      </div>
    </section>

    <div class="vsplit">
      <svg class="split-chev"><use href="#chevL"/></svg>
      <svg class="split-chev"><use href="#chevR"/></svg>
      <div class="dots dots-up"><i></i><i></i><i></i></div>
    </div>

    <section class="work">
      <div class="tabs tabs-up tabs-work">
        <div class="tab tab-light"><svg class="i20"><use href="#bolt"/></svg><span>Quick Start</span><svg class="i20 tab-pin"><use href="#pin"/></svg></div>
        <div class="tab"><svg class="i20"><use href="#arrR"/></svg><span>Request</span></div>
        <div class="tab"><svg class="i20"><use href="#arrL"/></svg><span>Response</span></div>
        <div class="tab"><svg class="i20"><use href="#stack"/></svg><span>Requester</span></div>
        <div class="tab tab-plus"><svg class="i20"><use href="#plus"/></svg></div>
      </div>
      <div class="panel">
        <div class="panel-head">
          <div class="back-btn">&lt;</div>
          <svg class="big-logo"><use href="#logo"/></svg>
          <h1 class="scan-title">Automated Scan</h1>
          <svg class="big-logo"><use href="#logo"/></svg>
          <div class="brand">
            <div class="brand-top"><span class="brand-zap">ZAP</span><span class="brand-by">by</span></div>
            <div class="brand-cx">Checkmarx</div>
          </div>
        </div>
        <p class="intro">This screen allows you to launch an automated scan against&nbsp; an application - just enter its URL below and press 'Attack'.</p>
        <p class="intro intro-2">Please be aware that you should only attack applications that you have been specifically been given permission to test.</p>
        <div class="form">
          <label class="f-label">URL to attack:</label>
          <div class="f-url">
            <div class="url-box"><span class="url-text">http://localhost:3000/#/</span><span class="url-drop"><svg class="chev-d"><use href="#chevD"/></svg></span></div>
            <div class="btn btn-select"><svg class="i20"><use href="#globe"/></svg><span>Select...</span></div>
          </div>
          <label class="f-label f-trad">Use traditional spider:</label>
          <div class="f-trad"><div class="checkbox"><svg class="check"><use href="#check"/></svg></div></div>
          <label class="f-label f-ajax">Use ajax spider:</label>
          <div class="f-ajax f-ajax-v">
            <div class="combo combo-if"><span class="combo-text">If Modern</span><svg class="chev-d"><use href="#chevD"/></svg></div>
            <span class="with">with</span>
            <div class="combo combo-br"><span class="combo-text">Chrome</span><svg class="chev-d"><use href="#chevD"/></svg></div>
          </div>
          <span class="f-btn-spacer"></span>
          <div class="f-btns">
            <div class="btn btn-attack"><svg class="i20"><use href="#bolt"/></svg><span>Attack</span></div>
            <div class="btn btn-stop"><span class="stop-box"></span><span>Stop</span></div>
          </div>
          <label class="f-label f-prog">Progress:</label>
          <div class="f-prog">Attack complete - see the Alerts tab for details of any issues found</div>
        </div>
      </div>
    </section>
  </main>

  <div class="hsplit"><div class="dots dots-h"><i></i><i></i><i></i></div></div>

  <section class="lower">
    <div class="tabs tabs-low">
      <div class="tab"><svg class="i20"><use href="#cal"/></svg><span>History</span></div>
      <div class="tab"><svg class="i20"><use href="#mag"/></svg><span>Search</span></div>
      <div class="tab tab-strong"><svg class="i20 fl-r"><use href="#flag"/></svg><span>Alerts</span><svg class="i20 tab-pin"><use href="#pin"/></svg></div>
      <div class="tab"><svg class="i20"><use href="#doc"/></svg><span>Output</span></div>
      <div class="tab"><svg class="i20"><use href="#plug"/></svg><span>WebSockets</span></div>
      <div class="tab"><svg class="i20 sp-k"><use href="#spider"/></svg><span>Spider</span></div>
      <div class="tab"><svg class="i20 sp-r"><use href="#spider"/></svg><span>AJAX Spider</span></div>
      <div class="tab"><svg class="i20"><use href="#fire"/></svg><span>Active Scan</span></div>
      <div class="tab tab-plus"><svg class="i20"><use href="#plus"/></svg></div>
    </div>
    <div class="lower-body">
      <div class="alerts">
        <div class="alert-tools">
          <svg class="i22"><use href="#target2"/></svg>
          <svg class="i22"><use href="#globeG"/></svg>
          <i class="asep"></i>
          <svg class="i22"><use href="#pencil"/></svg>
          <i class="asep"></i>
          <svg class="i22"><use href="#brush"/></svg>
        </div>
        <div class="alert-tree">
          <div class="arow arow-root"><svg class="exp"><use href="#chevD"/></svg><svg class="i22"><use href="#folderOpen"/></svg><span>Alerts (13)</span></div>
          <div class="arow arow-sel"><svg class="exp-r"><use href="#chevR"/></svg><svg class="i22 fl-o"><use href="#flag"/></svg><span>Content Security Policy (CSP) Header Not Set (22)</span></div>
          <div class="arow"><svg class="exp-r"><use href="#chevR"/></svg><svg class="i22 fl-o"><use href="#flag"/></svg><span>Cross-Domain Misconfiguration (54)</span></div>
          <div class="arow"><svg class="exp-r"><use href="#chevR"/></svg><svg class="i22 fl-o"><use href="#flag"/></svg><span>Hidden File Found (4)</span></div>
          <div class="arow"><svg class="exp-r"><use href="#chevR"/></svg><svg class="i22 fl-o"><use href="#flag"/></svg><span>Missing Anti-clickjacking Header (10)</span></div>
          <div class="arow"><svg class="exp-r"><use href="#chevR"/></svg><svg class="i22 fl-o"><use href="#flag"/></svg><span>Session ID in URL Rewrite (34)</span></div>
          <div class="arow"><svg class="exp-r"><use href="#chevR"/></svg><svg class="i22 fl-o"><use href="#flag"/></svg><span>Vulnerable JS Library</span></div>
          <div class="arow"><svg class="exp-r"><use href="#chevR"/></svg><svg class="i22 fl-y"><use href="#flag"/></svg><span>Cross-Domain JavaScript Source File Inclusion (4)</span></div>
          <div class="arow"><svg class="exp-r"><use href="#chevR"/></svg><svg class="i22 fl-y"><use href="#flag"/></svg><span>Private IP Disclosure</span></div>
          <div class="arow"><svg class="exp-r"><use href="#chevR"/></svg><svg class="i22 fl-y"><use href="#flag"/></svg><span>Timestamp Disclosure - Unix (21)</span></div>
          <div class="arow"><svg class="exp-r"><use href="#chevR"/></svg><svg class="i22 fl-y"><use href="#flag"/></svg><span>X-Content-Type-Options Header Missing (34)</span></div>
          <div class="arow"><svg class="exp-r"><use href="#chevR"/></svg><svg class="i22 fl-b"><use href="#flag"/></svg><span>Information Disclosure - Suspicious Comments (4)</span></div>
          <div class="arow"><svg class="exp-r"><use href="#chevR"/></svg><svg class="i22 fl-b"><use href="#flag"/></svg><span>Modern Web Application (3)</span></div>
          <div class="arow"><svg class="exp-r"><use href="#chevR"/></svg><svg class="i22 fl-b"><use href="#flag"/></svg><span>Retrieved from Cache (24)</span></div>
        </div>
      </div>
      <div class="vsplit2"><div class="dots dots-low"><i></i><i></i><i></i></div></div>
      <div class="details">
        <div class="d-main">
          <div class="d-grid">
            <span>Attack:</span><span></span>
            <span>Evidence:</span><span></span>
            <span>CWE ID:</span><span>693</span>
            <span>WASC ID:</span><span>15</span>
            <span>Source:</span><span>Passive (10038 - Content Security Policy (CSP) Header Not Set)</span>
            <span>Alert Reference:</span><span>10038-1</span>
            <span>Input Vector:</span><span></span>
          </div>
          <fieldset class="fs fs-desc">
            <legend>Description:</legend>
            <div class="desc-body">
              <div class="desc-text">
                <div>Content Security Policy (CSP) is an added layer of security that helps to detect and mitigate certain types of attacks, including Cross Site Scripting (XSS) and data injection attacks.</div>
                <div>These attacks are used for everything from data theft to site defacement or distribution of malware. CSP provides a set of standard HTTP headers that allow website owners to declare</div>
                <div>approved sources of content that browsers should be allowed to load on that page — covered types are JavaScript, CSS, HTML frames, fonts, images and embeddable objects such as</div>
              </div>
              <div class="desc-track"><div class="desc-thumb"></div></div>
            </div>
          </fieldset>
          <fieldset class="fs fs-other"><legend>Other Info:</legend></fieldset>
          <fieldset class="fs fs-sol"><legend>Solution:</legend></fieldset>
        </div>
        <div class="d-track"><div class="d-thumb"></div></div>
      </div>
    </div>
  </section>

  <div class="status">
    <div class="st-left">
      <span>Alerts</span>
      <div class="st-flags">
        <svg class="i22 fl-r2"><use href="#flag"/></svg><span>0</span>
        <svg class="i22 fl-o"><use href="#flag"/></svg><span>6</span>
        <svg class="i22 fl-y"><use href="#flag"/></svg><span>4</span>
        <svg class="i22 fl-b"><use href="#flag"/></svg><span>3</span>
      </div>
      <span class="st-proxy">Main Proxy: localhost:8080</span>
    </div>
    <div class="st-right">
      <span class="st-cur">Current Status</span>
      <div class="st-item"><svg class="i22"><use href="#sun"/></svg><span>0</span></div>
      <div class="st-item"><svg class="i22"><use href="#inbox"/></svg><span>0</span></div>
      <div class="st-item"><svg class="i22"><use href="#fire"/></svg><span>0</span></div>
      <div class="st-item"><svg class="i22"><use href="#target"/></svg><span>0</span></div>
      <div class="st-item"><svg class="i22"><use href="#hammer"/></svg><span>0</span></div>
      <div class="st-item"><svg class="i22 sp-r"><use href="#spider"/></svg><span>0</span></div>
      <div class="st-item"><svg class="i22 sp-b"><use href="#spider"/></svg><span>0</span></div>
      <div class="st-item"><svg class="i22 ey-b"><use href="#eye"/></svg><span>0</span></div>
      <div class="st-item"><svg class="i22 ey-k"><use href="#eye"/></svg><span>0</span></div>
      <div class="st-item"><svg class="i22 sp-k"><use href="#spider"/></svg><span>0</span></div>
    </div>
  </div>

  <footer class="taskbar">
    <div class="weather">
      <div class="wx-icon"><svg class="wx-wind"><use href="#wind"/></svg><span class="wx-badge">4</span></div>
      <div class="wx-text"><div>65°F</div><div class="wx-sub">Windy</div></div>
    </div>
    <svg class="tb-win"><use href="#winlogo"/></svg>
    <div class="tb-search"><svg class="tb-srch"><use href="#srch"/></svg><span>Search</span></div>
    <div class="tb-apps">
      <div class="tb-app"><svg class="ap-tasks"><use href="#tasks"/></svg></div>
      <div class="tb-app"><svg class="ap-copilot"><use href="#copilot"/></svg></div>
      <div class="tb-app tb-dot"><svg class="ap-explorer"><use href="#explorer"/></svg></div>
      <div class="tb-app tb-active"><svg class="ap-zap"><use href="#logo"/></svg></div>
      <div class="tb-app tb-dot"><svg class="ap-term"><use href="#term"/></svg></div>
      <div class="tb-app tb-dot"><svg class="ap-word"><use href="#word"/></svg><span class="word-w">W</span></div>
      <div class="tb-app tb-dot"><svg class="ap-snip"><use href="#snip"/></svg></div>
    </div>
    <div class="tray">
      <div class="tr-box tr-chev"><svg class="tr-up"><use href="#chevU"/></svg></div>
      <div class="tr-box tr-cloud"><svg class="i22"><use href="#cloud"/></svg></div>
      <div class="tr-box tr-lang"><div>ENG</div><div>US</div></div>
      <div class="tr-box tr-wifi"><svg class="i22"><use href="#wifi"/></svg></div>
      <div class="tr-box tr-vol"><svg class="i22"><use href="#vol"/></svg></div>
      <div class="tr-box tr-batt"><svg class="i22"><use href="#batt"/></svg></div>
      <div class="tr-clock"><div>7:31 PM</div><div>8/13/2025</div></div>
      <div class="tr-box tr-bell"><svg class="i22"><use href="#bell"/></svg></div>
    </div>
  </footer>
</div>
</body>
</html>
```

FILE: styles.css
```css
* { box-sizing: border-box; }
html, body { margin: 0; padding: 0; height: 100%; overflow: hidden; }
body { font-family: "Liberation Sans", Arial, sans-serif; font-size: 14.600px; color: #111; background: #f2f2f2; }
.defs { position: absolute; width: 0; height: 0; overflow: hidden; }
svg { display: block; flex: none; overflow: visible; }
.app { width: 1918px; height: 1078px; display: flex; flex-direction: column; background: #f2f2f2; }

.i20 { width: 20px; height: 20px; }
.i22 { width: 22px; height: 22px; }
.fl-o { color: #f59a18; }
.fl-y { color: #f4cc2a; }
.fl-b { color: #5c9ad8; }
.fl-r { color: #ec4a38; }
.fl-r2 { color: #f2573f; }
.sp-k { color: #3a3a3a; }
.sp-r { color: #c8202a; }
.sp-b { color: #2226d8; }
.ey-b { color: #2240c0; }
.ey-k { color: #444; }

/* title bar */
.titlebar { height: 39px; flex: none; display: grid; grid-template-columns: 1fr auto 1fr; align-items: center; padding-bottom: 2px; }
.menu { display: flex; align-items: center; gap: 20px; }
.menu-logo { width: 21px; height: 21px; margin-left: 10px; margin-right: -1px; }
.wintitle { color: #666; font-size: 14.300px; }
.winctl { display: flex; justify-content: flex-end; align-items: center; gap: 43px; padding-right: 20px; }
.wc { width: 12px; height: 12px; }
.wc-min { height: 10px; }

/* main toolbar */
.toolbar { height: 29px; flex: none; display: flex; align-items: center; border-top: 2px solid #b5b5b5; border-bottom: 2px solid #b5b5b5; padding-left: 2px; }
.combo { display: flex; align-items: center; justify-content: space-between; background: #fff; border: 1px solid #c6c6c6; border-radius: 3px; padding: 0 6px 0 8px; }
.combo-mode { width: 145px; height: 25px; }
.chev-d { width: 13px; height: 9px; color: #777; }
.tbtn { width: 32.500px; height: 25px; flex: none; display: flex; align-items: center; justify-content: center; }
.ti { width: 23px; height: 22px; }
.sel { background: #c9c9c9; border-radius: 4px; background-clip: content-box; padding: 0 2.500px; }
.tsep { width: 1.700px; height: 24px; background: #cbcbcb; flex: none; }

/* upper area */
.upper { height: 509px; flex: none; display: flex; }
.sites { width: 657px; flex: none; display: flex; flex-direction: column; }
.work { flex: 1; min-width: 0; display: flex; flex-direction: column; }
.tabs { display: flex; flex: none; }
.tabs-up { height: 42px; border-bottom: 2px solid #cfcfcf; }
.tabs-up .tab { padding-top: 4px; }
.tabs-work { margin-left: -2px; }
.tabs-work .tab { padding-left: 15.500px; padding-right: 15.500px; }
.tabs-work .tab:first-child { padding-left: 15px; }
.tab { display: flex; align-items: center; gap: 5px; padding: 0 15px; border-bottom: 3px solid transparent; margin-bottom: -2px; }
.tabs-up .tab-first { padding-left: 14px; }
.tab-light { border-bottom-color: #a0c2e2; }
.tab-plus { margin-left: 3px; }
.tab-pin { margin-left: 2px; }
.sub-tools { height: 43px; flex: none; display: flex; align-items: center; gap: 10.500px; padding: 0 0 2px 10px; }
.sites-tree { flex: 1; margin: 0 3px 1px 2px; background: #fff; border: 2px solid #c8c8c8; padding-top: 1.500px; }
.srow { height: 23px; display: flex; align-items: center; padding-left: 4.500px; }
.exp, .exp-a { width: 13px; height: 9px; color: #a0a0a0; }
.exp-r { width: 9px; height: 13px; color: #a0a0a0; }
.ic-ctx { margin-left: 9px; margin-right: 3px; }
.srow-ctx { padding-left: 49px; gap: 4px; margin: -1px 0 1px; }
.ic-globe { margin-left: 11px; margin-right: 8px; }
.srow-gap { margin-top: 4px; }
.srow-host { padding-left: 28px; }
.ic-folder { margin-left: 12px; margin-right: 3px; }
.ic-hostflag { margin-right: 7px; }

.vsplit { width: 7px; flex: none; display: flex; flex-direction: column; align-items: center; padding-top: 8px; color: #666; }
.split-chev { width: 9px; height: 12px; margin-bottom: 6px; }
.dots { display: flex; gap: 2px; }
.dots i { width: 3px; height: 3px; border-radius: 50%; background: #a8a8a8; display: block; }
.dots-up, .dots-low { flex-direction: column; }
.dots-up { margin-top: 213px; }

.panel { flex: 1; margin-top: 4px; margin-bottom: 1px; background: #fff; border: 2px solid #bdbdbd; border-right-width: 1px; min-height: 0; }
.panel-head { height: 90px; display: flex; align-items: center; padding: 0 9px 0 6.500px; }
.back-btn { width: 37px; height: 37px; border: 1px solid #cfcfcf; border-radius: 3px; display: flex; align-items: center; justify-content: center; font-size: 20px; }
.big-logo { width: 82px; height: 82px; }
.scan-title { flex: 1; margin: 0; padding-right: 1px; text-align: center; font-weight: 400; font-size: 45px; color: #000; }
.brand { width: 148px; margin-left: 9px; margin-top: 3px; }
.brand-top { display: flex; align-items: flex-end; gap: 3.500px; height: 36px; }
.brand-zap { font-weight: 700; font-size: 43px; line-height: 36px; color: #0d67b2; }
.brand-by { font-family: Inter, sans-serif; font-weight: 700; font-size: 17px; line-height: 20px; color: #0d67b2; }
.brand-cx { font-family: "DejaVu Sans Mono", monospace; font-weight: 700; font-size: 24.500px; line-height: 25px; color: #1b1a85; letter-spacing: 1.900px; margin-top: -2px; white-space: nowrap; }
.intro { margin: 13px 0 0; height: 20px; line-height: 20px; padding-left: 13px; color: #111; }
.intro-2 { margin-top: 14px; }
.form { display: grid; grid-template-columns: 146.500px 1fr; padding: 0 52px 0 56px; margin-top: 59px; align-items: center; }
.f-url { display: flex; gap: 1px; height: 29px; }
.url-box { flex: 1; display: flex; background: #fff; border: 1px solid #c9c9c9; border-radius: 3px; box-shadow: 0 0 0 1px #f0f0f0; }
.url-text { flex: 1; padding-left: 8px; line-height: 27px; }
.url-drop { width: 26px; display: flex; align-items: center; justify-content: center; border-left: 1px solid #d8d8d8; }
.btn { display: flex; align-items: center; background: #fff; border: 1px solid #c9c9c9; border-radius: 3px; }
.btn-select { width: 113px; padding-left: 18px; gap: 4px; }
.f-trad { margin-top: 10px; height: 18px; display: flex; align-items: center; }
.checkbox { width: 17px; height: 18px; margin-left: 10px; background: #fff; border: 1.500px solid #5aa6ee; border-radius: 3px; display: flex; align-items: center; justify-content: center; }
.check { width: 12px; height: 12px; }
.f-ajax { margin-top: 16px; }
.f-ajax-v { display: flex; align-items: center; padding-left: 6.500px; }
.combo-if { width: 101px; height: 27px; }
.with { width: 51px; padding-left: 13px; }
.combo-br { width: 160px; height: 27px; }
.f-btn-spacer { height: 28px; margin-top: 6px; }
.f-btns { display: flex; gap: 1px; margin-top: 6px; height: 28px; }
.btn-attack { width: 102px; padding-left: 17px; gap: 5px; }
.btn-stop { width: 91px; padding-left: 20px; gap: 9px; background: #f2f2f2; color: #8c8c8c; }
.stop-box { width: 13px; height: 18px; background: #d6d6d6; border: 1px solid #bcbcbc; }
.f-prog { margin-top: 5px; height: 23px; line-height: 23px; }

.hsplit { height: 5px; flex: none; display: flex; justify-content: center; align-items: center; }

/* lower area */
.lower { height: 413px; flex: none; display: flex; flex-direction: column; }
.tabs-low { height: 41px; padding-top: 4px; border-bottom: 1px solid #cfcfcf; }
.tabs-low .tab { margin-bottom: -1px; height: 37px; }
.tab-strong { border-bottom-color: #3679bf; }
.lower-body { flex: 1; min-height: 0; display: flex; }
.alerts { width: 667px; flex: none; display: flex; flex-direction: column; }
.alert-tools { height: 35px; flex: none; display: flex; align-items: center; padding-left: 7px; gap: 11px; }
.asep { width: 1px; height: 24px; background: #ccc; margin: 0 -1px 0 0; }
.alert-tree { flex: 1; min-height: 0; background: #fff; border: 1px solid #a4bfdc; border-bottom-width: 2px; padding-top: .5px; }
.arow { height: 22.500px; display: flex; align-items: center; padding-left: 28px; }
.arow .exp-r { margin-right: 10px; }
.arow .i22 { margin-right: 4px; }
.arow-root { padding-left: 2px; height: 23px; }
.arow-root .exp { margin-right: 9px; }
.arow-sel { background: #2675bf; color: #fff; height: 23px; }
.vsplit2 { width: 3px; flex: none; display: flex; align-items: center; padding-top: 8px; }
.dots-low i { width: 2.500px; height: 2.500px; }
.details { flex: 1; min-width: 0; display: flex; border-left: 1px solid #cdcdcd; overflow: hidden; }
.d-main { flex: 1; min-width: 0; padding: 6px 4px 0 0; height: 372px; overflow: hidden; }
.d-grid { display: grid; grid-template-columns: 108px 1fr; grid-auto-rows: 22.500px; align-items: center; padding-left: 1px; white-space: nowrap; }
.fs { margin: 0 0 0 5px; padding: 0; border: 2px solid #d6d6d6; min-width: 0; }
.fs legend { margin-left: 2px; padding: 0 3px; line-height: 17px; }
.fs-desc { height: 89px; margin-top: 3px; }
.fs-other { height: 90px; margin-top: 7px; }
.fs-sol { height: 90px; margin-top: 6px; }
.desc-body { display: flex; }
.desc-text { flex: 1; min-width: 0; padding: 6px 0 0 8px; line-height: 20px; white-space: nowrap; overflow: hidden; height: 66px; }
.desc-track { width: 13px; height: 65px; margin: 3px 2px 0 0; background: #f7f7f7; }
.desc-thumb { height: 48px; background: #dcdcdc; }
.d-track { width: 12px; flex: none; padding-top: 50px; }
.d-thumb { height: 163px; background: #dcdcdc; }

/* status */
.status { height: 25px; flex: none; display: flex; justify-content: space-between; align-items: center; border-bottom: 2px solid #bdbdbd; border-top: 1px solid #dcdcdc; padding: 0 6px 0 12.500px; }
.st-left, .st-right, .st-flags, .st-item { display: flex; align-items: center; }
.st-flags { margin-left: 8.500px; }
.st-flags span { margin-left: 4px; margin-right: 10.700px; }
.st-proxy { border-left: 1px solid #cfcfcf; padding-left: 4px; margin-left: -2px; }
.st-right { gap: 9.900px; }
.st-cur { margin-right: -4.700px; }
.st-item { gap: 5px; }

/* taskbar */
.taskbar { height: 58px; flex: none; display: flex; align-items: center; padding-top: 2px; color: #222; font-family: "Open Sans", sans-serif; font-size: 14.500px;
  background: linear-gradient(90deg, #e8dcc8 0, #ebdcc9 25%, #ecd8d2 33%, #ecd6d6 38%, #efe2cc 46%, #efe8c8 47.700%, #e0eef4 50%, #dfecf3 100%); }
.weather { width: 613px; flex: none; display: flex; align-items: center; padding-left: 24px; }
.wx-icon { width: 41px; height: 40px; position: relative; }
.wx-wind { width: 30px; height: 22px; margin-top: 9px; }
.wx-badge { position: absolute; left: 14px; top: -2px; width: 20px; height: 20px; border-radius: 50%; background: #c4281c; color: #fff; font-size: 12.500px; font-weight: 700; display: flex; align-items: center; justify-content: center; }
.wx-text { line-height: 20px; }
.wx-sub { color: #5c5c5c; }
.tb-win { width: 29px; height: 29px; }
.tb-search { width: 273px; height: 38px; margin-left: 18px; background: #f8f3ee; border: 1px solid #e8e0d8; border-radius: 19px; display: flex; align-items: center; padding-left: 13px; gap: 12px; color: #555; font-size: 16px; }
.tb-srch { width: 20px; height: 20px; }
.tb-apps { display: flex; gap: 7px; margin-left: 6px; }
.tb-app { width: 48px; height: 48px; border-radius: 5px; display: flex; align-items: center; justify-content: center; position: relative; }
.tb-dot::after, .tb-active::after { content: ""; position: absolute; bottom: 0; left: 19px; width: 10px; height: 4px; border-radius: 2px; background: #808487; }
.tb-active { background: #f0f6fa; box-shadow: 0 0 0 1px #e9f0f5; }
.tb-active::after { left: 16px; width: 16px; background: #2a8494; }
.word-w { position: absolute; left: 11px; top: 15px; font-family: "Liberation Sans", sans-serif; font-weight: 700; font-size: 12px; line-height: 14px; color: #fff; }
.ap-tasks { width: 30px; height: 38px; }
.ap-copilot { width: 30px; height: 36px; }
.ap-explorer { width: 30px; height: 30px; }
.ap-zap { width: 30px; height: 30px; }
.ap-term { width: 30px; height: 32px; }
.ap-word { width: 30px; height: 36px; }
.ap-snip { width: 30px; height: 36px; margin-top: 8px; }
.tray { display: flex; align-items: center; margin-left: auto; padding-right: 19px; }
.tr-box { display: flex; align-items: center; justify-content: center; }
.tr-chev { width: 30px; }
.tr-up { width: 14px; height: 9px; color: #111; }
.tr-cloud { width: 48px; }
.tr-lang { width: 50px; flex-direction: column; line-height: 21px; }
.tr-wifi { width: 30px; margin-left: 7px; }
.tr-vol { width: 28px; }
.tr-batt { width: 34px; }
.tr-clock { width: 83px; text-align: right; line-height: 20px; }
.tr-bell { width: 28px; margin-left: 5px; }
```
